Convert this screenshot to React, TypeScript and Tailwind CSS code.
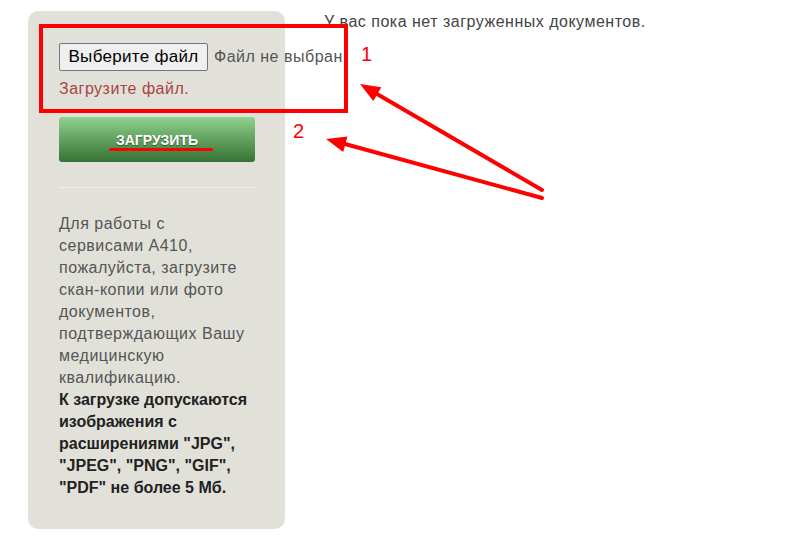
import React from "react";

function Arrows() {
  return (
    <svg
      className="pointer-events-none absolute left-0 top-0"
      width="801"
      height="545"
      viewBox="0 0 801 545"
    >
      <line x1="542" y1="190" x2="377" y2="94" stroke="#ff0000" strokeWidth="4" strokeLinecap="round" />
      <polygon points="360,84 381.3,87.2 373.3,101" fill="#ff0000" />
      <line x1="542" y1="198" x2="345" y2="144" stroke="#ff0000" strokeWidth="4" strokeLinecap="round" />
      <polygon points="326,139 347.4,136.6 343.2,152" fill="#ff0000" />
    </svg>
  );
}

export default function App() {
  return (
    <div className="relative h-[545px] w-[801px] overflow-hidden bg-white font-['Liberation_Sans',Arial,sans-serif] text-[16px] leading-[22px] tracking-[0.5px]">
      <div className="flex items-start pl-[28px] pt-[11px]">
        <aside className="w-[257px] rounded-[10px] bg-[#e1e1da] pb-[30px] pl-[31px] pr-[30px] pt-[32px]">
          <div className="flex items-center whitespace-nowrap">
            <button className="h-[28px] w-[149px] shrink-0 rounded-[2px] border border-[#767676] bg-[#efefef] text-[17px] tracking-[0.3px] text-black">
              Выберите файл
            </button>
            <span className="ml-[6px] shrink-0 text-[#555]">Файл не выбран</span>
          </div>
          <p className="mt-[7px] text-[#a94442]">Загрузите файл.</p>
          <button className="mt-[17px] flex h-[45px] w-full items-center justify-center rounded-[3px] bg-gradient-to-b from-[#90d28d] to-[#357434] text-[14px] font-bold uppercase tracking-normal text-white [text-shadow:0_1px_1px_rgba(0,0,0,0.45)]">
            Загрузить
          </button>
          <hr className="mt-[25px] border-0 border-t border-[#efefe9]" />
          <p className="mt-[25px] pr-[6px] text-[#555]">
            Для работы с сервисами А410, пожалуйста, загрузите скан-копии или
            фото документов, подтверждающих Вашу медицинскую квалификацию.
            <br />
            <span className="font-bold tracking-normal text-[#222]">
              К загрузке допускаются изображения с расширениями "JPG", "JPEG",
              "PNG", "GIF", "PDF" не более 5 Мб.
            </span>
          </p>
        </aside>
        <p className="ml-[39px] text-[#444]">У вас пока нет загруженных документов.</p>
      </div>

      {/* annotations */}
      <div className="pointer-events-none absolute left-[39px] top-[24px] h-[89px] w-[309px] border-[4px] border-[#ff0000]" />
      <div className="pointer-events-none absolute left-[109px] top-[148px] h-[3px] w-[104px] rounded-full bg-[#ff0000]" />
      <span className="absolute left-[361px] top-[43px] text-[20px] text-[#ff0000]">1</span>
      <span className="absolute left-[293px] top-[120px] text-[20px] text-[#ff0000]">2</span>
      <Arrows />
    </div>
  );
}
